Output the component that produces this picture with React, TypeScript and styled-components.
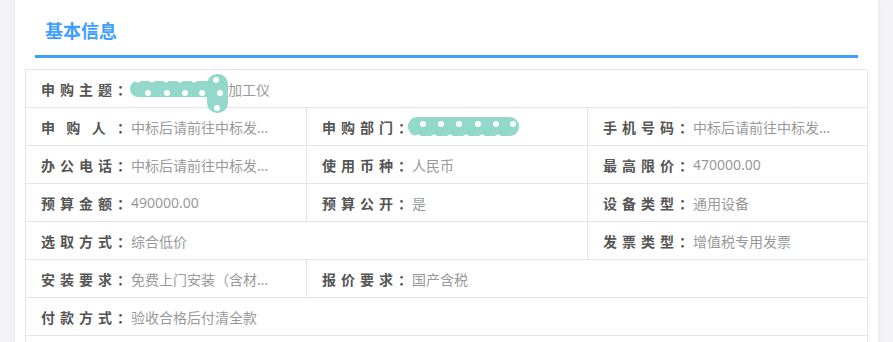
import React from "react";
import styled, { createGlobalStyle } from "styled-components";

const GlobalStyle = createGlobalStyle`
  html, body {
    margin: 0;
    padding: 0;
    background: #f3f3f5;
    font-family: "Noto Sans", "Noto Sans CJK SC", "Liberation Sans", sans-serif;
  }
`;

const Page = styled.div`
  padding: 0 15px;
  min-height: 100vh;
  box-sizing: border-box;
`;

const Panel = styled.div`
  background: #fff;
  min-height: 100vh;
  padding: 0 10px;
  box-shadow: 0 0 4px rgba(0, 0, 0, 0.07);
  overflow: hidden;
`;

const Header = styled.div`
  margin: 0 10px;
  padding: 17px 0 11px 10px;
  border-bottom: 3px solid #409eff;
`;

const Title = styled.h2`
  margin: 0;
  font-family: "Noto Sans CJK SC", sans-serif;
  font-size: 18px;
  line-height: 27px;
  font-weight: bold;
  color: #409eff;
`;

const Table = styled.div`
  margin-top: 11px;
  display: grid;
  grid-template-columns: 281px 281px 280px;
  grid-auto-rows: 38px;
  border-top: 1px solid #e4e4ea;
  border-left: 1px solid #e4e4ea;
  width: 842px;
  box-sizing: border-box;
`;

const Cell = styled.div<{ $span?: number }>`
  grid-column: span ${(p) => p.$span ?? 1};
  display: flex;
  align-items: center;
  padding: 0 20px 0 15px;
  border-right: 1px solid #e4e4ea;
  border-bottom: 1px solid #e4e4ea;
  font-size: 14px;
  min-width: 0;
`;

const Label = styled.span`
  flex: 0 0 90px;
  width: 90px;
  font-family: "Noto Sans CJK SC", sans-serif;
  font-weight: bold;
  color: #555;
  text-align: justify;
  text-align-last: justify;
  white-space: nowrap;
`;

const Value = styled.span<{ $wide?: boolean }>`
  color: #999;
  white-space: nowrap;
  overflow: hidden;
  text-overflow: ellipsis;
  min-width: 0;
  max-width: ${(p) => (p.$wide ? "none" : "140px")};
`;

const Redact = styled.svg<{ $shift?: number }>`
  flex: 0 0 auto;
  overflow: visible;
  margin-left: ${(p) => p.$shift ?? 0}px;
`;

const TEAL = "#92d9cc";

function BlobLong() {
  const dots = [18, 37, 55, 72, 90];
  const scallops = [8, 22, 36, 50, 64];
  return (
    <Redact width={98} height={16} viewBox="0 -8 98 16" $shift={-1}>
      <rect x={0} y={-8} width={92} height={16} rx={8} fill={TEAL} />
      <rect x={77} y={-15} width={21} height={39} rx={10} fill={TEAL} />
      {scallops.map((x) => (
        <circle key={"t" + x} cx={x} cy={-9.5} r={3} fill="#fff" />
      ))}
      {dots.map((x) => (
        <circle key={x} cx={x} cy={4} r={3} fill="#fff" />
      ))}
      <circle cx={86} cy={-9} r={3} fill="#fff" />
      <circle cx={87} cy={19} r={3} fill="#fff" />
    </Redact>
  );
}

function BlobShort() {
  const dots = [15, 33, 51, 70, 88, 105];
  const scallops = [10, 26, 42, 58, 74, 90];
  return (
    <Redact width={111} height={19} viewBox="0 -9.5 111 19" $shift={-4}>
      <rect x={0} y={-9.5} width={111} height={19} rx={9} fill={TEAL} />
      {scallops.map((x) => (
        <circle key={"b" + x} cx={x} cy={11} r={3} fill="#fff" />
      ))}
      {dots.map((x) => (
        <circle key={x} cx={x} cy={-2.5} r={3} fill="#fff" />
      ))}
    </Redact>
  );
}

type Item = { label: string; value?: string; span?: number; blob?: "long" | "short" };

const items: Item[] = [
  { label: "申购主题：", value: "加工仪", span: 3, blob: "long" },
  { label: "申购人：", value: "中标后请前往中标发布页面查看" },
  { label: "申购部门：", blob: "short" },
  { label: "手机号码：", value: "中标后请前往中标发布页面查看" },
  { label: "办公电话：", value: "中标后请前往中标发布页面查看" },
  { label: "使用币种：", value: "人民币" },
  { label: "最高限价：", value: "470000.00" },
  { label: "预算金额：", value: "490000.00" },
  { label: "预算公开：", value: "是" },
  { label: "设备类型：", value: "通用设备" },
  { label: "选取方式：", value: "综合低价", span: 2 },
  { label: "发票类型：", value: "增值税专用发票" },
  { label: "安装要求：", value: "免费上门安装（含材料费）" },
  { label: "报价要求：", value: "国产含税", span: 2 },
  { label: "付款方式：", value: "验收合格后付清全款", span: 3 },
];

export default function App() {
  return (
    <>
      <GlobalStyle />
      <Page>
        <Panel>
          <Header>
            <Title>基本信息</Title>
          </Header>
          <Table>
            {items.map((it, i) => (
              <Cell key={i} $span={it.span}>
                <Label>{it.label}</Label>
                {it.blob === "long" && <BlobLong />}
                {it.blob === "short" && <BlobShort />}
                {it.value && <Value $wide={(it.span ?? 1) > 1}>{it.value}</Value>}
              </Cell>
            ))}
            <Cell $span={3} />
          </Table>
        </Panel>
      </Page>
    </>
  );
}
